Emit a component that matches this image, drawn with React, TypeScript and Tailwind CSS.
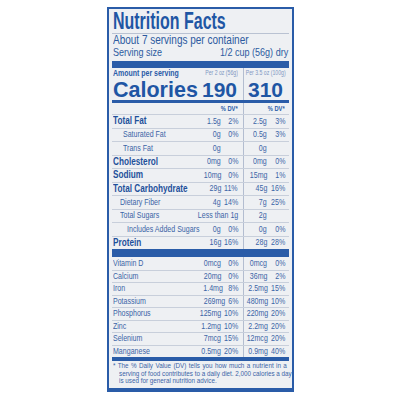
import React from 'react';

// Liberation Sans, squeezed a little to get the condensed label face
const sans = "font-['Liberation_Sans',Arial,sans-serif]";
const condL = 'inline-block origin-left [transform:scaleX(0.82)] whitespace-nowrap';
const condR = 'inline-block origin-right [transform:scaleX(0.82)] whitespace-nowrap';

type Row = {
  label: string;
  bold?: boolean;
  indent?: number;
  a: string;
  ap: string;
  b: string;
  bp: string;
};

const macros: Row[] = [
  { label: 'Total Fat', bold: true, a: '1.5g', ap: '2%', b: '2.5g', bp: '3%' },
  { label: 'Saturated Fat', indent: 11, a: '0g', ap: '0%', b: '0.5g', bp: '3%' },
  { label: 'Trans Fat', indent: 11, a: '0g', ap: '', b: '0g', bp: '' },
  { label: 'Cholesterol', bold: true, a: '0mg', ap: '0%', b: '0mg', bp: '0%' },
  { label: 'Sodium', bold: true, a: '10mg', ap: '0%', b: '15mg', bp: '1%' },
  { label: 'Total Carbohydrate', bold: true, a: '29g', ap: '11%', b: '45g', bp: '16%' },
  { label: 'Dietary Fiber', indent: 8, a: '4g', ap: '14%', b: '7g', bp: '25%' },
  { label: 'Total Sugars', indent: 8, a: 'Less than 1g', ap: '', b: '2g', bp: '' },
  { label: 'Includes Added Sugars', indent: 15, a: '0g', ap: '0%', b: '0g', bp: '0%' },
  { label: 'Protein', bold: true, a: '16g', ap: '16%', b: '28g', bp: '28%' },
];

const vitamins: Row[] = [
  { label: 'Vitamin D', a: '0mcg', ap: '0%', b: '0mcg', bp: '0%' },
  { label: 'Calcium', a: '20mg', ap: '0%', b: '36mg', bp: '2%' },
  { label: 'Iron', a: '1.4mg', ap: '8%', b: '2.5mg', bp: '15%' },
  { label: 'Potassium', a: '269mg', ap: '6%', b: '480mg', bp: '10%' },
  { label: 'Phosphorus', a: '125mg', ap: '10%', b: '220mg', bp: '20%' },
  { label: 'Zinc', a: '1.2mg', ap: '10%', b: '2.2mg', bp: '20%' },
  { label: 'Selenium', a: '7mcg', ap: '15%', b: '12mcg', bp: '20%' },
  { label: 'Manganese', a: '0.5mg', ap: '20%', b: '0.9mg', bp: '40%' },
];

function NutrientRow({ row, first, tall }: { row: Row; first?: boolean; tall?: boolean }) {
  return (
    <div
      className={`flex items-center ${tall ? 'h-[13.5px]' : 'h-[12.5px]'} ${
        first ? '' : 'border-t border-[#c8cfdb]'
      } text-[8.6px] leading-none text-[#3b64a6]`}
    >
      <div
        className={`flex-1 min-w-0 ${row.bold ? 'font-bold text-[10px] text-[#1f509b]' : ''}`}
        style={{ paddingLeft: row.indent ?? 1 }}
      >
        <span className={condL}>{row.label}</span>
      </div>
      <div className="w-[44px] shrink-0 h-full flex items-center justify-end">
        <span className={condR}>{row.a}</span>
        <span className="w-[22px] pr-[5px] flex justify-end">
          <span className={condR}>{row.ap}</span>
        </span>
      </div>
      <div className="w-[46px] shrink-0 h-full flex items-center justify-end border-l border-[#b3bdd0]">
        <span className={condR}>{row.b}</span>
        <span className="w-[22px] pr-[4px] flex justify-end">
          <span className={condR}>{row.bp}</span>
        </span>
      </div>
    </div>
  );
}

export default function App() {
  return (
    <div className={`w-[400px] h-[400px] bg-white overflow-hidden ${sans}`}>
      <div className="ml-[107px] mt-[7px] w-[187px] h-[385px] border-2 border-b-4 border-[#2a5ca8] bg-[#eef0f3] px-[3px] flex flex-col">
        {/* heading */}
        <div className="h-[24px] leading-[24px] text-[23.5px] font-bold text-[#1f56a4] pl-[1px]">
          <span className="inline-block origin-left [transform:scaleX(0.68)] whitespace-nowrap">
            Nutrition Facts
          </span>
        </div>
        <div className="border-b border-[#b9c2d2]" />
        <div className="h-[12px] leading-[12px] text-[12.2px] text-[#2c5aa0] pl-[1px]">
          <span className={condL}>About 7 servings per container</span>
        </div>
        <div className="h-[13px] leading-[13px] text-[11px] text-[#2c5aa0] flex justify-between pl-[1px] pr-[1px]">
          <span className={condL}>Serving size</span>
          <span className={condR}>1/2 cup (56g) dry</span>
        </div>
        <div className="mt-[2px] h-[7px] bg-[#2a5ca8]" />

        {/* calories */}
        <div className="flex h-[10px] items-center leading-none">
          <div className="flex-1 text-[8.5px] font-bold text-[#2a5ca8] pl-[1px]">
            <span className={condL}>Amount per serving</span>
          </div>
          <div className="w-[44px] h-full flex items-center justify-end pr-[5px] text-[6.3px] text-[#7f97c2]">
            <span className={condR}>Per 2 oz (56g)</span>
          </div>
          <div className="w-[46px] h-full flex items-center justify-end pr-[3px] border-l border-[#b3bdd0] text-[6.3px] text-[#7f97c2]">
            <span className={condR}>Per 3.5 oz (100g)</span>
          </div>
        </div>
        <div className="flex h-[22px] items-end text-[#1f56a4] font-bold">
          <div className="flex-1 text-[21.5px] leading-[20px] pl-[1px]">Calories</div>
          <div className="w-[44px] h-full flex items-end justify-end pr-[6px] text-[21px] leading-[20px]">
            190
          </div>
          <div className="w-[46px] h-full flex items-end justify-end pr-[6px] border-l border-[#b3bdd0] text-[21px] leading-[20px]">
            310
          </div>
        </div>
        <div className="h-[3px] bg-[#2a5ca8]" />

        {/* % DV header */}
        <div className="flex h-[11px] items-center text-[7px] font-bold text-[#2a5ca8] leading-none">
          <div className="flex-1" />
          <div className="w-[44px] h-full flex items-center justify-end pr-[5px]">
            <span className={condR}>% DV*</span>
          </div>
          <div className="w-[46px] h-full flex items-center justify-end pr-[4px] border-l border-[#b3bdd0]">
            <span className={condR}>% DV*</span>
          </div>
        </div>

        {macros.map((row) => (
          <NutrientRow key={row.label} row={row} tall />
        ))}

        <div className="h-[8px] bg-[#2a5ca8]" />

        {vitamins.map((row, i) => (
          <NutrientRow key={row.label} row={row} first={i === 0} />
        ))}

        <div className="h-[4px] bg-[#2a5ca8]" />

        {/* footnote */}
        <div className="pt-[1px] pl-[1px] text-[7.7px] leading-[7.5px] text-[#3b64a6]">
          <div className="w-[212px] origin-left [transform:scaleX(0.82)] whitespace-nowrap [text-align-last:justify]">
            * The % Daily Value (DV) tells you how much a nutrient in a
          </div>
          <div className="ml-[6px] w-[205px] origin-left [transform:scaleX(0.82)] whitespace-nowrap [text-align-last:justify]">
            serving of food contributes to a daily diet. 2,000 calories a day
          </div>
          <div className="ml-[6px] origin-left [transform:scaleX(0.82)] whitespace-nowrap">
            is used for general nutrition advice.
          </div>
        </div>
      </div>
    </div>
  );
}
